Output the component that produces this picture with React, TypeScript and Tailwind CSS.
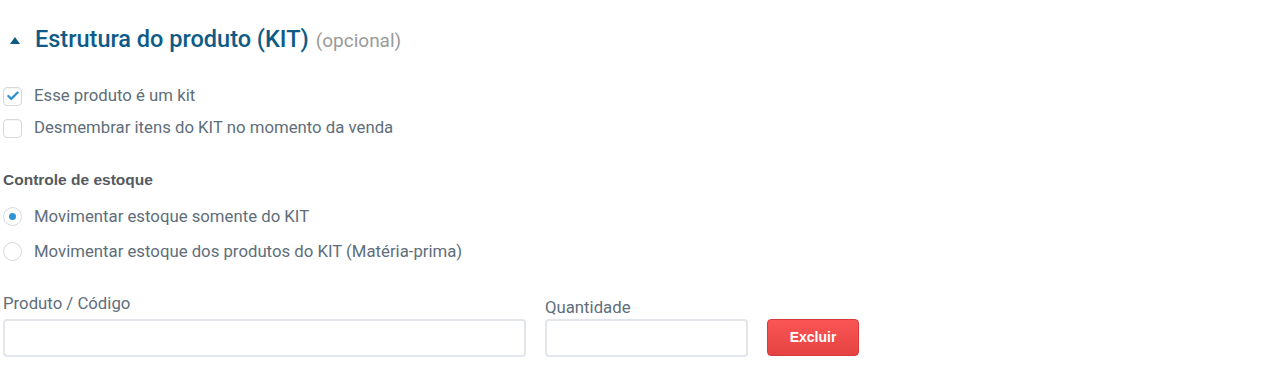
import { Check } from "lucide-react";

function CheckRow({ checked, label }: { checked?: boolean; label: string }) {
  return (
    <label className="flex items-center gap-[12px] h-[32px]">
      <span className="w-[19px] h-[19px] rounded-[4px] border border-[#d4d9de] bg-white flex items-center justify-center shadow-[inset_0_1px_1px_rgba(0,0,0,0.04)]">
        {checked && <Check className="w-[14px] h-[14px] text-[#2f94d1]" strokeWidth={4} />}
      </span>
      <span className="text-[16.75px] text-[#5e6e7a]">{label}</span>
    </label>
  );
}

function RadioRow({ checked, label }: { checked?: boolean; label: string }) {
  return (
    <label className="flex items-center gap-[12px] h-[35px]">
      <span className="w-[19px] h-[19px] rounded-full border border-[#d4d9de] bg-white flex items-center justify-center">
        {checked && <span className="w-[7px] h-[7px] rounded-full bg-[#2f94d1]" />}
      </span>
      <span className="text-[16.75px] text-[#5e6e7a]">{label}</span>
    </label>
  );
}

export default function App() {
  return (
    <div className="min-h-screen bg-white font-['Roboto',sans-serif] px-[3px] pt-[24px]">
      <div className="flex items-center h-[32px]">
        <span className="ml-[7px] w-0 h-0 border-l-[5px] border-r-[5px] border-b-[7px] border-l-transparent border-r-transparent border-b-[#0f5a80]" />
        <h2 className="ml-[15px] text-[23.5px] font-medium text-[#0d5b86]">
          Estrutura do produto (KIT)
          <span className="ml-[7px] text-[19px] font-normal text-[#9a9a9a]">(opcional)</span>
        </h2>
      </div>

      <div className="mt-[24px] flex flex-col">
        <CheckRow checked label="Esse produto é um kit" />
        <CheckRow label="Desmembrar itens do KIT no momento da venda" />
      </div>

      <div className="mt-[26px] leading-[20px] text-[15.5px] font-bold text-[#555a5e] font-['Liberation_Sans',sans-serif]">Controle de estoque</div>

      <div className="mt-[9px] flex flex-col">
        <RadioRow checked label="Movimentar estoque somente do KIT" />
        <RadioRow label="Movimentar estoque dos produtos do KIT (Matéria-prima)" />
      </div>

      <div className="mt-[24px] flex items-end gap-[19px]">
        <div className="flex flex-col w-[523px]">
          <span className="leading-[20px] text-[16.75px] text-[#5e6e7a] mb-[6px]">Produto / Código</span>
          <input className="h-[38px] rounded-[4px] border-2 border-[#e2e6ea] bg-white" />
        </div>
        <div className="flex flex-col w-[203px]">
          <span className="leading-[20px] text-[16.75px] text-[#5e6e7a] mb-[2px]">Quantidade</span>
          <input className="h-[38px] rounded-[4px] border-2 border-[#e2e6ea] bg-white" />
        </div>
        <button className="mb-[1px] w-[92px] h-[37px] rounded-[4px] border border-[#d9393b] bg-gradient-to-b from-[#fb5555] to-[#e54343] text-white text-[14px] font-bold font-['Liberation_Sans',sans-serif]">
          Excluir
        </button>
      </div>
    </div>
  );
}
